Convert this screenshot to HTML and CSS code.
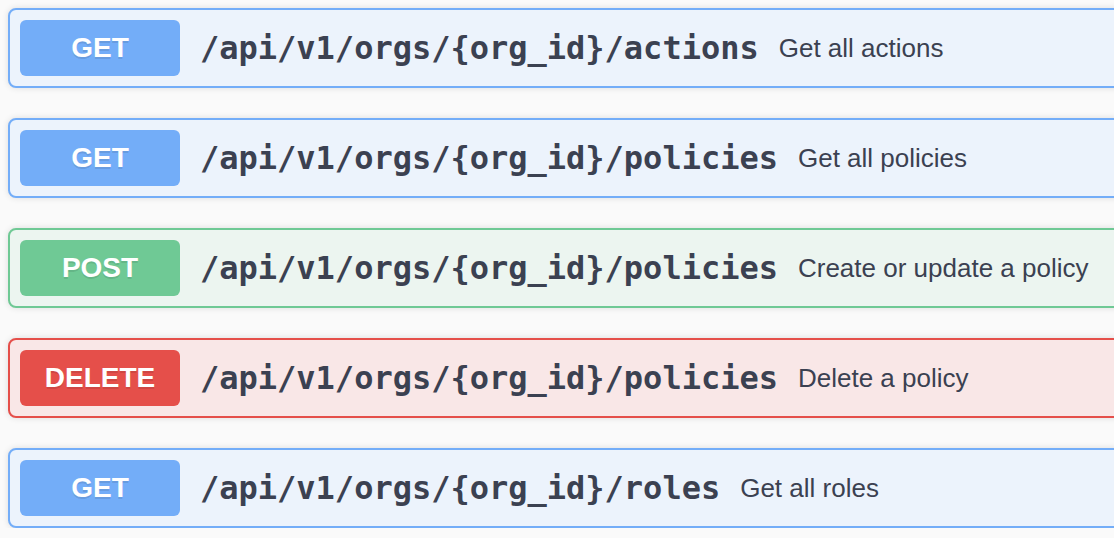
FILE: index.html
```html
<!DOCTYPE html>
<html>
<head>
<meta charset="utf-8">
<link rel="stylesheet" href="styles.css">
</head>
<body>
<div class="list">
  <div class="op op-get">
    <span class="method">GET</span>
    <span class="path">/api/v1/orgs/{org_id}/actions</span>
    <span class="desc">Get all actions</span>
  </div>
  <div class="op op-get">
    <span class="method">GET</span>
    <span class="path">/api/v1/orgs/{org_id}/policies</span>
    <span class="desc">Get all policies</span>
  </div>
  <div class="op op-post">
    <span class="method">POST</span>
    <span class="path">/api/v1/orgs/{org_id}/policies</span>
    <span class="desc">Create or update a policy</span>
  </div>
  <div class="op op-delete">
    <span class="method">DELETE</span>
    <span class="path">/api/v1/orgs/{org_id}/policies</span>
    <span class="desc">Delete a policy</span>
  </div>
  <div class="op op-get">
    <span class="method">GET</span>
    <span class="path">/api/v1/orgs/{org_id}/roles</span>
    <span class="desc">Get all roles</span>
  </div>
</div>
</body>
</html>
```

FILE: styles.css
```css
html, body {
  margin: 0;
  padding: 0;
  background: #fafafa;
  overflow: hidden;
}
body {
  padding: 8px 0 0 8px;
  font-family: "Liberation Sans", Arial, sans-serif;
}
.list {
  width: 1140px;
  display: flex;
  flex-direction: column;
  gap: 30px;
}
.op {
  display: flex;
  align-items: center;
  height: 80px;
  box-sizing: border-box;
  padding: 0 10px;
  border: 2px solid;
  border-radius: 8px;
  box-shadow: 0 0 6px rgba(0, 0, 0, 0.12);
}
.method {
  width: 160px;
  height: 56px;
  flex: none;
  display: flex;
  align-items: center;
  justify-content: center;
  border-radius: 6px;
  color: #fff;
  font-weight: bold;
  font-size: 28px;
  text-shadow: 0 2px 0 rgba(0, 0, 0, 0.1);
}
.path {
  padding: 0 20px;
  font-family: "DejaVu Sans Mono", "Liberation Mono", monospace;
  font-weight: bold;
  font-size: 32px;
  color: #3b4151;
}
.desc {
  font-size: 26px;
  color: #3b4151;
}
.op-get {
  background: #ecf3fc;
  border-color: #73adf8;
}
.op-get .method {
  background: #73adf8;
}
.op-post {
  background: #ecf5f0;
  border-color: #6fc995;
}
.op-post .method {
  background: #6fc995;
}
.op-delete {
  background: #f9e7e7;
  border-color: #e54f4a;
}
.op-delete .method {
  background: #e54f4a;
}
```
